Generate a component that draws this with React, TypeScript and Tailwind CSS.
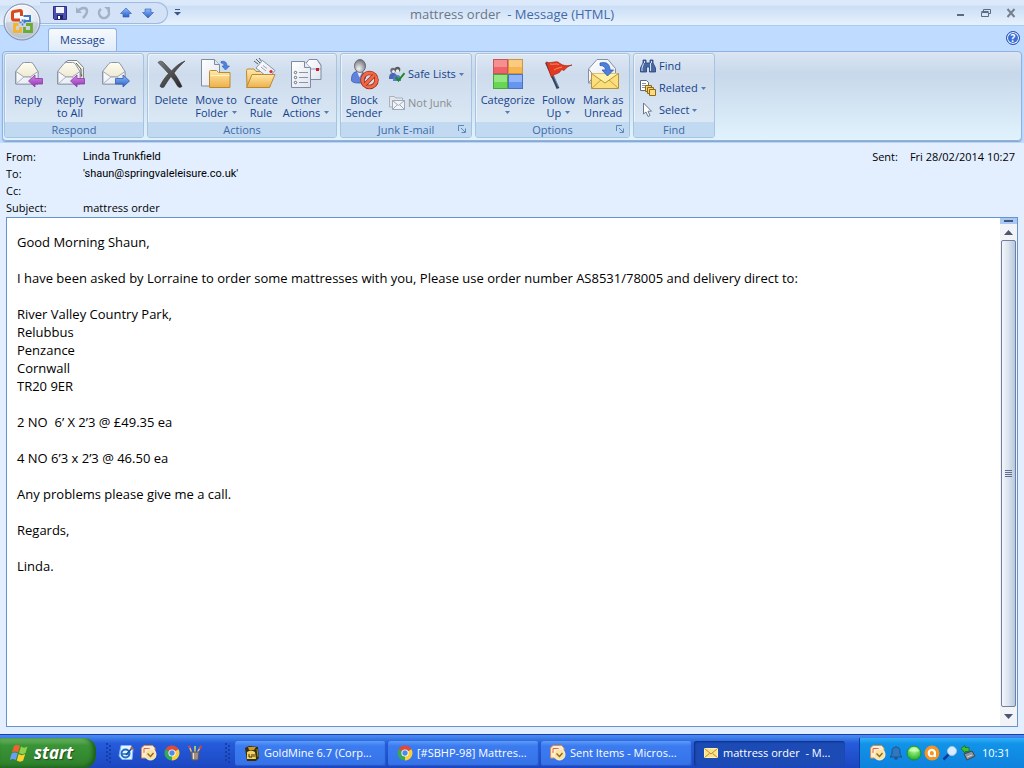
import { useState, type ReactNode } from "react";
import clsx from "clsx";

// Shared gradients, referenced by id from the icons
function IconDefs() {
  return (
    <svg className="absolute h-0 w-0" aria-hidden="true">
      <defs>
        <linearGradient id="paper" x1="0" y1="0" x2="1" y2="1">
          <stop offset="0" stopColor="#ffffff" />
          <stop offset="1" stopColor="#dfe4ee" />
        </linearGradient>
        <linearGradient id="cream" x1="0" y1="0" x2="0" y2="1">
          <stop offset="0" stopColor="#fffdf0" />
          <stop offset="1" stopColor="#e6dfc4" />
        </linearGradient>
        <linearGradient id="folder" x1="0" y1="0" x2="0" y2="1">
          <stop offset="0" stopColor="#ffe9a8" />
          <stop offset="1" stopColor="#edb04a" />
        </linearGradient>
        <linearGradient id="purple" x1="0" y1="0" x2="0" y2="1">
          <stop offset="0" stopColor="#d58be8" />
          <stop offset="1" stopColor="#9331b4" />
        </linearGradient>
        <linearGradient id="blue" x1="0" y1="0" x2="0" y2="1">
          <stop offset="0" stopColor="#8dbdf7" />
          <stop offset="1" stopColor="#2c5fca" />
        </linearGradient>
        <linearGradient id="ink" x1="0" y1="0" x2="1" y2="1">
          <stop offset="0" stopColor="#7b7b7b" />
          <stop offset="1" stopColor="#222222" />
        </linearGradient>
        <radialGradient id="orb" cx="0.5" cy="0.3" r="0.7">
          <stop offset="0" stopColor="#ffffff" />
          <stop offset="0.6" stopColor="#e3e7ef" />
          <stop offset="1" stopColor="#a9b3c6" />
        </radialGradient>
        <radialGradient id="head" cx="0.4" cy="0.7" r="0.7">
          <stop offset="0" stopColor="#f4f4f4" />
          <stop offset="1" stopColor="#6f747c" />
        </radialGradient>
        <radialGradient id="green" cx="0.5" cy="0.3" r="0.7">
          <stop offset="0" stopColor="#b9ff9a" />
          <stop offset="1" stopColor="#1fae1f" />
        </radialGradient>
      </defs>
    </svg>
  );
}

interface IconProps {
  size?: number;
  children: ReactNode;
}

function Icon({ size = 32, children }: IconProps) {
  return (
    <svg
      width={size}
      height={size}
      viewBox={`0 0 ${size} ${size}`}
      fill="none"
      className="shrink-0"
      aria-hidden="true"
    >
      {children}
    </svg>
  );
}

const Envelope = () => (
  <>
    <path d="M3.500 13.500 10 5.500q1-1 2.500-1h6q1.500 0 2.500 1l5 8v12.500H3.500z" fill="url(#cream)" stroke="#8a96a8" />
    <path d="M4 13.500 12 19h6l8-5.500V26H4z" fill="url(#paper)" stroke="#8a96a8" strokeWidth=".8" />
    <path d="M4 26l8.500-7.500h5L26 26" stroke="#aab3c0" />
  </>
);

const LeftArrow = () => (
  <path d="M16.500 23 23 17v3.500h7.500v5.500H23V29z" fill="url(#purple)" stroke="#8a3aa6" strokeWidth=".8" />
);

const ReplyIcon = () => (
  <Icon>
    <Envelope />
    <LeftArrow />
  </Icon>
);

const ReplyAllIcon = () => (
  <Icon>
    <path d="M11 4.500 14 2.500h9l6.500 7v12.500H20z" fill="url(#cream)" stroke="#7d8592" />
    <path d="M22 5l5 6v8M24 12l4 6" stroke="#4f555e" />
    <Envelope />
    <LeftArrow />
  </Icon>
);

const ForwardIcon = () => (
  <Icon>
    <Envelope />
    <path d="M30.500 23 24 17v3.500h-7.500v5.500H24V29z" fill="url(#blue)" stroke="#2f5aae" strokeWidth=".8" />
  </Icon>
);

const DeleteIcon = () => (
  <Icon>
    <path
      d="M3 4.500C5 2.500 7 3 8.500 4.500c3 3 5.500 6 8 8.500C20 9 24.500 5 30 3c-4.500 4-8 8-11 12 3 4 5.500 8 8 13.500-2 1.500-3.500 1-4.500-.5-2-3.500-4-6.500-6.500-9.500-3 4-5 7-7 10.500-1.500 1-3.500.5-4-1 2-4.500 5-8.500 8.500-12.500C10 11.500 6.500 8 3 4.500z"
      fill="url(#ink)"
      stroke="#333"
      strokeWidth=".6"
    />
  </Icon>
);

const MoveIcon = () => (
  <Icon>
    <path d="M1.500 1.500h13l5 5V28h-18z" fill="url(#paper)" stroke="#7f8ba0" />
    <path d="M14.500 1.500v5h5" stroke="#7f8ba0" fill="#dfe5f0" />
    <path d="M9.500 13.500q0-1 1-1h6l2 2h11.500v15H9.500z" fill="url(#folder)" stroke="#b98a35" />
    <path d="M10.500 17.500h19" stroke="#fff3c8" />
    <path d="M21 3.500c4-1 6 1 6 4.500h2.500L25.500 12 22 8h2c0-2-1-3-3-3z" fill="#4f83dc" stroke="#2f5aae" strokeWidth=".6" />
  </Icon>
);

const RuleIcon = () => (
  <Icon>
    <path d="M9 3l4 3M11 1l4 4M14 0l3 4" stroke="#555c68" />
    <path d="M1.500 12.500q0-1.500 1.500-1.500h6l2 2.500h14v15.500h-23z" fill="url(#folder)" stroke="#b98a35" />
    <path d="M17.500 2.500 30 12.500 23.500 20 11 10z" fill="url(#paper)" stroke="#8a96a8" />
    <path d="M16 9l5 4M18 7.500l4 3" stroke="#9aa5b6" />
    <circle cx="26" cy="13.500" r="1.600" fill="#d9272d" />
    <path d="M7 16.500h23L24.500 29.500H1.500z" fill="url(#folder)" stroke="#b98a35" />
  </Icon>
);

const OtherIcon = () => (
  <Icon>
    <path d="M15.500 6 19 1.500h8l4 5.500v14.500H15.500z" fill="url(#paper)" stroke="#7f8ba0" />
    <path d="M15.500 6l5 5H31M27 1.500l4 6" stroke="#8a96a8" />
    <rect x="26" y="10" width="3" height="3" fill="#c81e2a" />
    <path d="M1.500 3.500h13l6 6V29.500h-19z" fill="url(#paper)" stroke="#7f8ba0" />
    <path d="M14.500 3.500v6h6" stroke="#7f8ba0" fill="#e4e9f2" />
    <path d="M9 14.500h9M9 19.500h9M9 24.500h9" stroke="#8a94a5" />
    <g fill="#fff" stroke="#5d6980">
      <circle cx="5.500" cy="14.500" r="1.200" />
      <circle cx="5.500" cy="19.500" r="1.200" />
      <circle cx="5.500" cy="24.500" r="1.200" />
    </g>
  </Icon>
);

const BlockIcon = () => (
  <Icon>
    <path d="M3.500 22c0-6 2-8.500 7-8.500s7 2.500 7 7l-5 4.500c-4 0-9 0-9-3z" fill="#5f83dc" stroke="#3d58a8" strokeWidth=".8" />
    <path d="M9 13.500l2.500 6 3-6z" fill="#e8edf8" />
    <ellipse cx="12" cy="8" rx="5.500" ry="6.500" fill="url(#head)" stroke="#555c66" strokeWidth=".8" />
    <circle cx="21.500" cy="22" r="7" stroke="#a82a16" strokeWidth="4.500" />
    <circle cx="21.500" cy="22" r="7" stroke="#ef6a45" strokeWidth="3" />
    <path d="M17 26.500 26 17.500" stroke="#a82a16" strokeWidth="4" />
    <path d="M17 26.500 26 17.500" stroke="#ef6a45" strokeWidth="2.600" />
  </Icon>
);

const CategorizeIcon = () => (
  <Icon>
    <rect x="1.500" y="1.500" width="14" height="14" fill="#f58f90" stroke="#c9545a" />
    <rect x="16.500" y="1.500" width="14" height="14" fill="#fccb82" stroke="#cf9440" />
    <rect x="1.500" y="16.500" width="14" height="14" fill="#94e682" stroke="#4ca340" />
    <rect x="16.500" y="16.500" width="14" height="14" fill="#91b5f7" stroke="#4c72bb" />
    <path d="M2 9h13v6H2z" fill="#ee6468" />
    <path d="M17 9h13v6H17z" fill="#f8b54f" />
    <path d="M2 24h13v6H2z" fill="#69d653" />
    <path d="M17 24h13v6H17z" fill="#6595ee" />
  </Icon>
);

const FlagIcon = () => (
  <Icon>
    <path d="M4.500 4.500 16 30.500" stroke="#33445f" strokeWidth="3" />
    <path d="M5.500 4.500 16.500 29" stroke="#7f95b8" strokeWidth=".8" />
    <path d="M4 4c4 2 8-1 12 0 4 3.500 8 4.500 14 3-4 1-6 3-8 5.500-1-.5-2-1-3-.5-1 3-3 3-5 4-2 .5-3 1.500-4.500 3.500z" fill="#e23a20" stroke="#a92412" strokeWidth=".7" />
    <path d="M8 6c4 1 6-1 9 .500M12 12c3-2 5-2 8-3" stroke="#f98a6c" />
  </Icon>
);

const UnreadIcon = () => (
  <Icon>
    <path d="M1.500 11 10 1.500h11l7.500 9V25h-27z" fill="url(#paper)" stroke="#8591a5" />
    <path d="M1.500 11l4 5M1.500 25l4-5" stroke="#8591a5" />
    <path d="M4.500 15.500h27v15h-27z" fill="#fbdf7c" stroke="#b8923a" />
    <path d="M4.500 30.500l10-9M31.500 30.500l-10-9" stroke="#c9a13f" />
    <path d="M4.500 15.500l13.500 9.500 13.500-9.500" fill="#fff0a8" stroke="#b8923a" />
    <path d="M13 5c7-2 10 2 10 7h3.500L20.500 18 15 12h3.500c0-3-2-4.500-5.500-4.500z" fill="#4d80dc" stroke="#274f9f" strokeWidth=".7" />
  </Icon>
);

const SafeIcon = () => (
  <Icon size={16}>
    <path d="M0 13c0-4 1-6 4-6s4 2 4 6z" fill="#4a66b8" />
    <circle cx="4" cy="4.500" r="2.700" fill="#6b7078" />
    <circle cx="4.500" cy="5.500" r="1.500" fill="#e8e8e8" />
    <path d="M4 15c0-4 1-6 4-6s4 2 4 6z" fill="#5a7ad0" />
    <circle cx="8.500" cy="3.500" r="2.800" fill="#565b63" />
    <circle cx="8.500" cy="5" r="1.700" fill="#efefef" />
    <path d="M6.500 11l3 3.500L15.500 7" stroke="#1f8a24" strokeWidth="2" />
  </Icon>
);

const NotJunkIcon = () => (
  <Icon size={16}>
    <path d="M.5 1.500h5l1 1.500h7v9H.5z" fill="#e3e8ef" stroke="#a9b1bd" />
    <path d="M3.500 5.500h12v9h-12z" fill="#f1f4f8" stroke="#9fa8b5" />
    <path d="M3.500 5.500l6 5 6-5M3.500 14.500 8 10M15.500 14.500 11 10" stroke="#9fa8b5" />
  </Icon>
);

const FindIcon = () => (
  <Icon size={16}>
    <path d="M3 2h3v3h4V2h3v3l2.500 5v4H9.500V9h-3v5H.5v-4L3 5z" fill="#4969a4" stroke="#263f72" strokeWidth=".8" />
    <path d="M3.500 5.500 2 10v3M10.500 5v8M4.500 3v2M11.500 3v2" stroke="#cfddf5" />
  </Icon>
);

const RelatedIcon = () => (
  <Icon size={16}>
    <path d="M.5.500h6l2 2v8h-8z" fill="#fff" stroke="#5b6980" />
    <path d="M2 3.500h4M2 5.500h5M2 7.500h5" stroke="#7f94bd" />
    <path d="M5.500 5.500h6v6h-6z" fill="#f8cf62" stroke="#8f6a1c" />
    <path d="M7.500 7.500h6v6h-6z" fill="#f8cf62" stroke="#8f6a1c" />
    <path d="M9.500 9.500h6v6h-6z" fill="#fbdc83" stroke="#8f6a1c" />
  </Icon>
);

const SelectIcon = () => (
  <Icon size={16}>
    <path d="M3.500 1v11l2.500-2 2 4.500 2-1-2-4.300h3.500z" fill="#fff" stroke="#6a7790" />
  </Icon>
);

const OutlookIcon = () => (
  <Icon size={16}>
    <path d="M3 .5h8.500L14 3v10H.5V3z" fill="#fdebd3" stroke="#e08e45" />
    <path d="M3 8V3.500h6" stroke="#d9694a" />
    <circle cx="9.500" cy="9.500" r="5.500" fill="#fce3a0" stroke="#fff6dd" />
    <path d="M6.500 8.500l3 3 3-3.500" stroke="#8d6a25" strokeWidth="1.400" />
  </Icon>
);

const ChromeIcon = () => (
  <Icon size={16}>
    <path d="M8 8 1.500 4.300A7.500 7.500 0 0 1 14.500 4.300z" fill="#dd4b39" />
    <path d="M8 8 1.500 4.300A7.500 7.500 0 0 0 8 15.500z" fill="#3aa757" />
    <path d="M8 8V15.500A7.500 7.500 0 0 0 14.500 4.300z" fill="#fbce3b" />
    <circle cx="8" cy="8" r="3.600" fill="#fff" />
    <circle cx="8" cy="8" r="2.700" fill="#4b8bea" />
  </Icon>
);

const BrowserIcon = () => (
  <Icon size={16}>
    <path d="M3 .5h10l2 4-1 10H4L1 11z" fill="#e8f4ff" stroke="#7fb3ee" />
    <circle cx="7.500" cy="8.500" r="4" stroke="#1d6dc8" strokeWidth="2" />
    <path d="M4 9h7" stroke="#1d6dc8" strokeWidth="1.500" />
    <path d="M14 3 8 10" stroke="#1a4f9a" strokeWidth="1.500" />
    <path d="M13 2l2 2" stroke="#d9532c" strokeWidth="2" />
  </Icon>
);

const BrushIcon = () => (
  <Icon size={16}>
    <path d="M5 8 2 1M8 8V1M10 8l4-7" stroke="#e8c07a" strokeWidth="1.500" />
    <path d="M2 1l1 2M14 1l-1 3" stroke="#d8402a" strokeWidth="2" />
    <path d="M8 1v3" stroke="#8fd36b" strokeWidth="2" />
    <path d="M4 7h8l-1 8H5z" fill="#9c8f8a" stroke="#5f5552" />
    <path d="M6.500 8v6" stroke="#e7e0dc" />
  </Icon>
);

const GoldMineIcon = () => (
  <Icon size={16}>
    <path d="M1 3l4-2 9 1 1 11-3 3H3z" fill="#3b2b08" />
    <path d="M4 2h8l-2 3H5z" fill="#c99a28" />
    <path d="M3 7q4-3 8 0l1 7H3z" fill="#f4d262" />
    <path d="M5 9v3h3V9M10 9v3" stroke="#3b2b08" />
    <path d="M13 4l1 8" stroke="#7c8f3a" />
  </Icon>
);

const MailIcon = () => (
  <Icon size={16}>
    <path d="M1.500 3.500h13v9h-13z" fill="#fde28a" stroke="#fff0b8" />
    <path d="M1.500 3.500 8 9l6.500-5.500M1.500 12.500l5-4M14.500 12.500l-5-4" stroke="#b98e2f" />
  </Icon>
);

const BellIcon = () => (
  <Icon size={16}>
    <path d="M2 12c2-1.500 2-3 2-5.500C4 3.500 5.500 2 8 2s4 1.500 4 4.500c0 2.500 0 4 2 5.500z" fill="#2f78c0" stroke="#1e4f8c" />
    <path d="M6.500 13.500h3" stroke="#1e4f8c" strokeWidth="2" />
  </Icon>
);

const StatusIcon = () => (
  <Icon size={16}>
    <circle cx="8" cy="8" r="7" fill="url(#green)" stroke="#1b8f3a" />
    <path d="M3 6.500a5 4 0 0 1 10 0z" fill="#d8ffc8" opacity=".7" />
  </Icon>
);

const AvastIcon = () => (
  <Icon size={16}>
    <circle cx="8" cy="8" r="7.500" fill="#f7941d" />
    <path d="M11 12V8a3.200 3.200 0 1 0-3.200 3.200" stroke="#fff" strokeWidth="2" />
    <circle cx="7.800" cy="8.200" r="3" stroke="#fff" strokeWidth="1.600" />
  </Icon>
);

const SearchIcon = () => (
  <Icon size={16}>
    <path d="M1.500 14.500l5-5" stroke="#16389c" strokeWidth="2.500" />
    <circle cx="10" cy="6" r="4.500" fill="#d6eeff" stroke="#a8c4e0" />
  </Icon>
);

const EjectIcon = () => (
  <Icon size={16}>
    <path d="M4 9l8-3 3 5-8 4z" fill="#8b939c" stroke="#3c444d" />
    <path d="M7 12l5-2" stroke="#d4dbe2" />
    <path d="M1 3.500 5 .500v2h4v4H5V8z" fill="#3fc02f" stroke="#176c12" strokeWidth=".7" />
  </Icon>
);

function OfficeLogo() {
  return (
    <svg width="38" height="38" viewBox="0 0 38 38" fill="none" aria-hidden="true">
      <circle cx="19" cy="19" r="18" fill="url(#orb)" stroke="#7d8ea9" />
      <circle cx="19" cy="19" r="16.500" stroke="#fff" opacity=".8" />
      <path d="M2.500 20a16.500 16.500 0 0 0 33 0c-8-3-25-3-33 0z" fill="#b9c3d5" opacity=".6" />
      <path d="M17 17H11q-1.500 0-1.500-1.500v-5.500q0-1.500 1.500-1.500l6-1q1.500 0 1.500 1.500v4" stroke="#d8481c" strokeWidth="3" />
      <path d="M21.500 14v-1h5.500v5h-5.500v-1.500" stroke="#3a7cc9" strokeWidth="2" />
      <path d="M17.500 24v4.500H11.500v-7h4" stroke="#f5b52a" strokeWidth="2.800" />
      <path d="M23 21.500h5.500v7h-7V24" stroke="#6bab2e" strokeWidth="2.800" />
      <path d="M16.500 19.500h6M19.500 16.500v6" stroke="#3a7cc9" strokeWidth="1.500" strokeDasharray="2 2" />
    </svg>
  );
}

function Caret() {
  return (
    <svg width="5" height="3" viewBox="0 0 5 3" className="inline-block shrink-0" aria-hidden="true">
      <path d="M0 0h5L2.500 3z" fill="#567db1" />
    </svg>
  );
}

interface BigButtonProps {
  icon: ReactNode;
  lines: string[];
  caret?: boolean;
  width: string;
}

function BigButton({ icon, lines, caret, width }: BigButtonProps) {
  return (
    <button type="button" className={clsx("flex flex-col items-center pt-1 whitespace-nowrap", width)}>
      {icon}
      <span className="mt-[3px] block leading-[13px]">{lines[0]}</span>
      <span className="flex h-[13px] items-center justify-center gap-1 leading-[13px]">
        {lines[1]}
        {caret && <Caret />}
      </span>
    </button>
  );
}

interface SmallButtonProps {
  icon: ReactNode;
  label: string;
  caret?: boolean;
  disabled?: boolean;
}

function SmallButton({ icon, label, caret, disabled }: SmallButtonProps) {
  return (
    <button
      type="button"
      disabled={disabled}
      className="flex h-[22px] items-center gap-[3px] whitespace-nowrap disabled:text-[#8d8d8d]"
    >
      {icon}
      {label}
      {caret && <Caret />}
    </button>
  );
}

interface GroupProps {
  title: string;
  width: string;
  launcher?: boolean;
  children: ReactNode;
}

function Group({ title, width, launcher, children }: GroupProps) {
  return (
    <section
      className={clsx(
        "flex h-[85px] shrink-0 flex-col overflow-hidden rounded-[3px] border border-[#a6c3e0] bg-linear-to-b from-[#dee8f5] via-[#cddbec] via-25% to-[#dfecf8] shadow-[inset_1px_1px_0_#eaf2fb]",
        width
      )}
    >
      <div className="flex flex-1 px-[2px]">{children}</div>
      <h2 className="relative h-[15px] bg-[#c1d9f1] text-center leading-[16px] text-[#3e6aaa]">
        {title}
        {launcher && (
          <button type="button" aria-label={`${title} settings`} className="absolute top-[3px] right-[5px]">
            <svg width="8" height="8" viewBox="0 0 8 8" fill="none">
              <path d="M.5 6V.500H6M3 3l4 4M7.500 3.500v4h-4" stroke="#5f86b8" />
            </svg>
          </button>
        )}
      </h2>
    </section>
  );
}

function TitleBar() {
  return (
    <header className="relative flex h-[26px] items-center border-b border-[#a9cdf0] bg-linear-to-b from-[#dbe9fb] from-20% via-[#cbdef6] via-25% to-[#e6f1fd]">
      <button type="button" aria-label="Office Button" className="absolute top-[3px] left-[3px] z-10">
        <OfficeLogo />
      </button>
      <div className="ml-10 flex h-[22px] w-32 items-center gap-[6px] rounded-r-full border border-l-0 border-[#9dbbe0] bg-[#d3e2f6] pl-3">
        <button type="button" aria-label="Save">
          <Icon size={16}>
            <path d="M1.500 1.500h13v13h-12l-1-1z" fill="#4a4fb0" stroke="#2c2f85" />
            <path d="M4 2h8v6H4z" fill="#f2f5fb" />
            <path d="M5 10h6v4H5z" fill="#20245c" />
            <path d="M6 11h2v3H6z" fill="#fff" />
          </Icon>
        </button>
        <button type="button" aria-label="Undo" disabled>
          <Icon size={16}>
            <path d="M4 6c3-4 9-4 9 0 0 3-2 5-4 7" stroke="#a3b1c6" strokeWidth="2.500" />
            <path d="M2 2v6h6z" fill="#a3b1c6" />
          </Icon>
        </button>
        <button type="button" aria-label="Repeat" disabled>
          <Icon size={16}>
            <path d="M12 5a5 5 0 1 1-7-1" stroke="#a3b1c6" strokeWidth="2.500" />
            <path d="M8 2h6v5z" fill="#a3b1c6" />
          </Icon>
        </button>
        <button type="button" aria-label="Previous Item">
          <Icon size={16}>
            <path d="M8 3l5.500 5.500H11V12H5V8.500H2.500z" fill="url(#blue)" stroke="#3868c4" strokeWidth=".7" />
          </Icon>
        </button>
        <button type="button" aria-label="Next Item">
          <Icon size={16}>
            <path d="M8 13 2.500 7.500H5V4h6v3.500h2.500z" fill="url(#blue)" stroke="#3868c4" strokeWidth=".7" />
          </Icon>
        </button>
      </div>
      <button type="button" aria-label="Customize Quick Access Toolbar" className="ml-[6px]">
        <svg width="7" height="7" viewBox="0 0 7 7">
          <path d="M1 0h5v1H1zM0 3h7L3.500 6.500z" fill="#3b5687" />
        </svg>
      </button>
      <h1 className="absolute inset-x-0 top-[5px] text-center text-[13px] leading-[18px] whitespace-pre text-[#4269a8]">
        <span className="text-[#6b7686]">mattress order </span> - Message (HTML)
      </h1>
      <div className="z-10 ml-auto flex items-center gap-[15px] pr-2">
        <button type="button" aria-label="Minimize">
          <svg width="10" height="10" viewBox="0 0 10 10">
            <path d="M1 6h7v2H1z" fill="#5f6b7c" />
          </svg>
        </button>
        <button type="button" aria-label="Restore">
          <svg width="10" height="10" viewBox="0 0 10 10" fill="none">
            <path d="M2.500 3V1.500h7v4H8M.5 4.500h7v4h-7zM.5 3.500h7" stroke="#5f6b7c" />
          </svg>
        </button>
        <button type="button" aria-label="Close">
          <svg width="10" height="10" viewBox="0 0 10 10" fill="none">
            <path d="M1.500 1l7 8M8.500 1l-7 8" stroke="#75808f" strokeWidth="2" />
          </svg>
        </button>
      </div>
    </header>
  );
}

function Ribbon() {
  return (
    <>
      <nav className="flex h-[25px] items-end justify-between pr-1 pl-12">
        <button
          type="button"
          className="h-[23px] w-[69px] rounded-t-[3px] border border-b-0 border-[#8db2e3] bg-linear-to-b from-[#f7fafe] to-[#e0ebf9]"
        >
          Message
        </button>
        <button
          type="button"
          aria-label="Help"
          className="mb-[6px] flex h-[14px] w-[14px] items-center justify-center rounded-full border border-[#2b57b4] bg-[#3d6fd6] text-[10px] leading-none font-bold text-white shadow-[inset_0_0_0_1px_#ffffff]"
        >
          ?
        </button>
      </nav>
      <div className="mx-[2px] flex h-[90px] gap-[3px] rounded-[4px] border border-[#8db2e3] bg-linear-to-b from-[#dbe5f3] via-[#c7d8ea] via-25% to-[#e0f3fd] px-px pt-px shadow-[0_1px_1px_#86a3c4]">
        <Group title="Respond" width="w-[140px]">
          <BigButton icon={<ReplyIcon />} lines={["Reply"]} width="w-[42px]" />
          <BigButton icon={<ReplyAllIcon />} lines={["Reply", "to All"]} width="w-[42px]" />
          <BigButton icon={<ForwardIcon />} lines={["Forward"]} width="w-12" />
        </Group>
        <Group title="Actions" width="w-[190px]">
          <BigButton icon={<DeleteIcon />} lines={["Delete"]} width="w-[42px]" />
          <BigButton icon={<MoveIcon />} lines={["Move to", "Folder"]} caret width="w-12" />
          <BigButton icon={<RuleIcon />} lines={["Create", "Rule"]} width="w-[42px]" />
          <BigButton icon={<OtherIcon />} lines={["Other", "Actions"]} caret width="w-12" />
        </Group>
        <Group title="Junk E-mail" width="w-[132px]" launcher>
          <BigButton icon={<BlockIcon />} lines={["Block", "Sender"]} width="w-[42px]" />
          <div className="flex flex-col gap-[7px] pt-[9px] pl-1">
            <SmallButton icon={<SafeIcon />} label="Safe Lists" caret />
            <SmallButton icon={<NotJunkIcon />} label="Not Junk" disabled />
          </div>
        </Group>
        <Group title="Options" width="w-[155px]" launcher>
          <BigButton icon={<CategorizeIcon />} lines={["Categorize", ""]} caret width="w-[60px]" />
          <BigButton icon={<FlagIcon />} lines={["Follow", "Up"]} caret width="w-[42px]" />
          <BigButton icon={<UnreadIcon />} lines={["Mark as", "Unread"]} width="w-12" />
        </Group>
        <Group title="Find" width="w-[82px]">
          <div className="flex flex-col pt-px pl-1">
            <SmallButton icon={<FindIcon />} label="Find" />
            <SmallButton icon={<RelatedIcon />} label="Related" caret />
            <SmallButton icon={<SelectIcon />} label="Select" caret />
          </div>
        </Group>
      </div>
    </>
  );
}

const fields = [
  { label: "From:", value: "Linda Trunkfield", contact: true },
  { label: "To:", value: "'shaun@springvaleleisure.co.uk'", contact: true },
  { label: "Cc:", value: "", contact: true },
  { label: "Subject:", value: "mattress order", contact: false },
];

function MessageHeader() {
  return (
    <div className="flex justify-between px-[6px] pt-[5px] pb-px leading-[17px] text-black">
      <dl className="grid grid-cols-[77px_auto]">
        {fields.map((field) => (
          <div key={field.label} className="contents">
            <dt>{field.label}</dt>
            <dd className={clsx(field.contact && "font-[Roboto,sans-serif]")}>{field.value}</dd>
          </div>
        ))}
      </dl>
      <dl className="flex gap-3 pr-[3px]">
        <dt>Sent:</dt>
        <dd>Fri 28/02/2014 10:27</dd>
      </dl>
    </div>
  );
}

const paragraphs = [
  ["Good Morning Shaun,"],
  [
    "I have been asked by Lorraine to order some mattresses with you, Please use order number AS8531/78005 and delivery direct to:",
  ],
  ["River Valley Country Park,", "Relubbus", "Penzance", "Cornwall", "TR20 9ER"],
  ["2 NO  6’ X 2’3 @ £49.35 ea"],
  ["4 NO 6’3 x 2’3 @ 46.50 ea"],
  ["Any problems please give me a call."],
  ["Regards,"],
  ["Linda."],
];

function MessageBody() {
  return (
    <main className="mx-[6px] mb-[7px] flex min-h-0 flex-1 border border-[#6593cf] bg-white">
      <article className="min-w-0 flex-1 space-y-[18px] overflow-hidden px-[10px] pt-[15px] font-['Open_Sans',sans-serif] text-[13px] leading-[18px] text-black">
        {paragraphs.map((lines, index) => (
          <p key={index} className="whitespace-pre-wrap">
            {lines.join("\n")}
          </p>
        ))}
      </article>
      <div className="flex w-[17px] shrink-0 flex-col items-center bg-[#f1f3f7]">
        <div className="flex h-[6px] w-full items-center justify-center bg-[#a9c8f5]">
          <div className="h-[2px] w-[9px] bg-[#3f5878]" />
        </div>
        <button type="button" aria-label="Scroll up" className="flex h-4 w-full items-center justify-center">
          <svg width="9" height="5" viewBox="0 0 9 5">
            <path d="M0 5h9L4.500 0z" fill="#4c5670" />
          </svg>
        </button>
        <div className="flex w-[15px] flex-1 flex-col items-center justify-center gap-px rounded-[2px] border border-[#6f7f9e] bg-linear-to-r from-[#f4f7fb] via-[#dbe3ee] to-[#b7c8dd]">
          <div className="h-px w-[7px] bg-[#5f6f8c]" />
          <div className="h-px w-[7px] bg-[#5f6f8c]" />
          <div className="h-px w-[7px] bg-[#5f6f8c]" />
          <div className="h-px w-[7px] bg-[#5f6f8c]" />
        </div>
        <button type="button" aria-label="Scroll down" className="flex h-[19px] w-full items-center justify-center">
          <svg width="9" height="5" viewBox="0 0 9 5">
            <path d="M0 0h9L4.500 5z" fill="#4c5670" />
          </svg>
        </button>
      </div>
    </main>
  );
}

const tasks = [
  { title: "GoldMine 6.7 (Corp...", icon: <GoldMineIcon /> },
  { title: "[#SBHP-98] Mattres...", icon: <ChromeIcon /> },
  { title: "Sent Items - Micros...", icon: <OutlookIcon /> },
  { title: "mattress order  - M...", icon: <MailIcon /> },
];

function Grip() {
  return (
    <svg width="5" height="22" viewBox="0 0 5 22" fill="none" className="shrink-0" aria-hidden="true">
      <path d="M1 1v20" stroke="#143fa6" strokeWidth="2" strokeDasharray="2 2" />
      <path d="M4 3v19" stroke="#143fa6" strokeWidth="2" strokeDasharray="2 2" />
    </svg>
  );
}

function Taskbar() {
  const [active, setActive] = useState(3);

  return (
    <footer className="flex h-[34px] shrink-0 items-stretch border-t border-[#1941a5] bg-linear-to-b from-[#4a8df0] via-[#255cdc] via-25% to-[#1c46c0] pt-[3px] text-white">
      <button
        type="button"
        className="flex w-24 shrink-0 items-center gap-1 rounded-r-xl bg-linear-to-b from-[#6cb866] via-[#3a9436] via-25% to-[#2d7f2b] pl-[10px] font-['Open_Sans',sans-serif] text-[17px] font-bold italic shadow-[inset_-3px_-1px_4px_#1c5c1c] text-shadow-[1px_1px_1px_#1d4d1d]"
      >
        <svg width="20" height="20" viewBox="0 0 20 20" aria-hidden="true">
          <path d="M4 3c2-1.500 4-1.500 6 0L8 9.500c-2-1.500-4-1.500-6 0z" fill="#f0622f" />
          <path d="M11 3.500c2 1.500 4 1.500 6.500 0l-2 6.500c-2 1.500-4 1.500-6.500 0z" fill="#8ed14b" />
          <path d="M1.700 10.500c2-1.500 4-1.500 6 0l-2 6.500c-2-1.500-4-1.500-6 0z" fill="#6a9df5" />
          <path d="M8.700 11c2 1.500 4 1.500 6.500 0l-2 6.500c-2 1.500-4 1.500-6.500 0z" fill="#fbd22f" />
        </svg>
        start
      </button>
      <div className="flex shrink-0 items-center pl-[10px]">
        <Grip />
        <div className="flex gap-[7px] pr-[22px] pl-[7px]">
          <button type="button" aria-label="Internet Explorer"><BrowserIcon /></button>
          <button type="button" aria-label="Outlook"><OutlookIcon /></button>
          <button type="button" aria-label="Chrome"><ChromeIcon /></button>
          <button type="button" aria-label="Paint"><BrushIcon /></button>
        </div>
        <Grip />
      </div>
      <div className="flex min-w-0 flex-1 items-center gap-[2px] pr-[14px] pl-[5px]">
        {tasks.map((task, index) => (
          <button
            key={task.title}
            type="button"
            onClick={() => setActive(index)}
            className={clsx(
              "flex h-[25px] min-w-0 flex-1 items-center gap-1 rounded-[3px] pl-[9px] whitespace-pre",
              index === active
                ? "bg-[#1c4bb5] shadow-[inset_1px_1px_2px_#0f2f80]"
                : "bg-linear-to-b from-[#5c9bf8] via-[#3b7bf0] via-20% to-[#3672e8] shadow-[inset_-1px_-1px_1px_#2558c8]"
            )}
          >
            {task.icon}
            {task.title}
          </button>
        ))}
      </div>
      <div className="flex w-[165px] shrink-0 items-center gap-[2px] border-l border-[#0d3d9c] bg-linear-to-b from-[#2fb0f7] via-[#1193ea] via-20% to-[#0f82dc] pl-[10px]">
        <OutlookIcon />
        <BellIcon />
        <StatusIcon />
        <AvastIcon />
        <SearchIcon />
        <EjectIcon />
        <time className="ml-1">10:31</time>
      </div>
    </footer>
  );
}

export default function App() {
  return (
    <div className="flex h-screen min-h-[480px] flex-col overflow-hidden bg-[#bfdbff] font-['Open_Sans',sans-serif] text-[11px] text-[#15428b]">
      <IconDefs />
      <TitleBar />
      <Ribbon />
      <div className="mt-[2px] flex min-h-0 flex-1 flex-col bg-[#e3efff]">
        <MessageHeader />
        <MessageBody />
      </div>
      <Taskbar />
    </div>
  );
}
